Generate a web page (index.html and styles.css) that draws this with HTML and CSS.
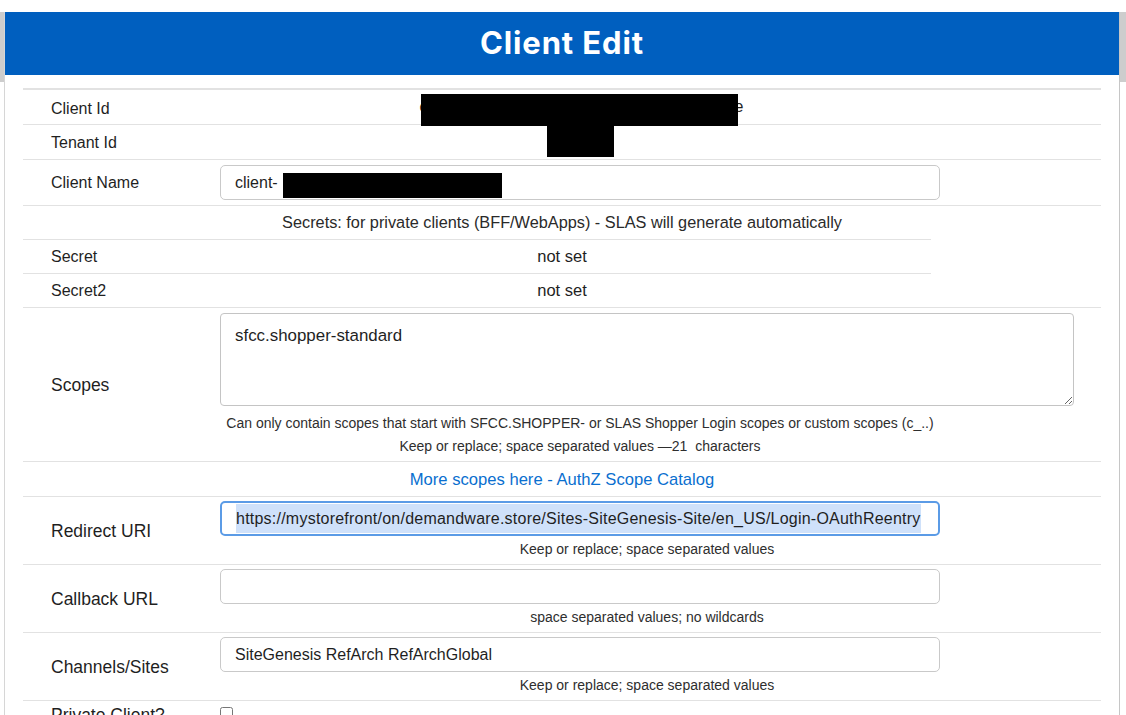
FILE: index.html
```html
<!DOCTYPE html>
<html lang="en">
<head>
<meta charset="utf-8">
<title>Client Edit</title>
<link rel="stylesheet" href="styles.css">
</head>
<body>
<div class="page">
  <div class="panel">
    <header class="title-bar"><h1>Client Edit</h1></header>
    <div class="form">
      <div class="rows">
        <div class="row row-short row-first">
          <div class="label">Client Id</div>
          <div class="value-center"><span class="masked">c<span class="redact redact-id"></span>e</span></div>
        </div>
        <div class="row row-short row-second">
          <div class="label">Tenant Id</div>
          <div class="value-center"><span class="redact redact-tenant"></span></div>
        </div>
        <div class="row row-input">
          <div class="label">Client Name</div>
          <div class="value"><div class="input">client-<span class="redact redact-name"></span></div></div>
        </div>
        <div class="row row-block">
          <div class="secrets-head">Secrets: for private clients (BFF/WebApps) - SLAS will generate automatically</div>
          <div class="secrets">
            <div class="secret-row secret-first">
              <div class="label">Secret</div>
              <div class="secret-value">not set</div>
            </div>
            <div class="secret-row">
              <div class="label">Secret2</div>
              <div class="secret-value">not set</div>
            </div>
          </div>
        </div>
        <div class="row row-scopes">
          <div class="label label-lg">Scopes</div>
          <div class="value">
            <textarea class="scopes-area">sfcc.shopper-standard</textarea>
            <div class="help-center">
              <div>Can only contain scopes that start with SFCC.SHOPPER- or SLAS Shopper Login scopes or custom scopes (c_..)</div>
              <div>Keep or replace; space separated values —21&nbsp; characters</div>
            </div>
          </div>
        </div>
        <div class="row row-block row-link">
          <a class="catalog-link" href="#">More scopes here - AuthZ Scope Catalog</a>
        </div>
        <div class="row row-field">
          <div class="label label-lg">Redirect URI</div>
          <div class="value">
            <div class="input input-focus"><span class="selected">https://mystorefront/on/demandware.store/Sites-SiteGenesis-Site/en_US/Login-OAuthReentry</span></div>
            <div class="help-wide">Keep or replace; space separated values</div>
          </div>
        </div>
        <div class="row row-field">
          <div class="label label-lg">Callback URL</div>
          <div class="value">
            <div class="input"></div>
            <div class="help-wide">space separated values; no wildcards</div>
          </div>
        </div>
        <div class="row row-field">
          <div class="label label-lg">Channels/Sites</div>
          <div class="value">
            <div class="input">SiteGenesis RefArch RefArchGlobal</div>
            <div class="help-wide">Keep or replace; space separated values</div>
          </div>
        </div>
        <div class="row row-check">
          <div class="label label-lg">Private Client?</div>
          <div class="value"><input type="checkbox" class="check"></div>
        </div>
      </div>
    </div>
  </div>
</div>
</body>
</html>
```
FILE: styles.css
```css
* { box-sizing: border-box; }
html, body { margin: 0; background: #fff; }
body {
  font-family: "Liberation Sans", Arial, sans-serif;
  font-size: 16px;
  color: #1f1f1f;
}
.page {
  height: 715px;
  overflow: hidden;
  padding-top: 12px;
  background: linear-gradient(to bottom, #fff 0, #fff 12px, #cdcdcd 12px, #cdcdcd 82px, #fff 82px);
}
.panel {
  margin: 0 6px 0 4px;
  border-left: 1px solid #d6d6d6;
  border-right: 1px solid #c6c6c6;
  background: #fff;
  min-height: 720px;
}
.title-bar {
  height: 63px;
  background: #005fbf;
  display: flex;
  align-items: center;
  justify-content: center;
}
.title-bar h1 {
  margin: 0 0 2px;
  font-family: Inter, "Liberation Sans", sans-serif;
  font-weight: 700;
  font-size: 31px;
  color: #fff;
  letter-spacing: 0.9px;
}
.form { padding: 13px 18px 0; }
.rows { border-top: 2px solid #e2e2e2; }
.row {
  display: grid;
  grid-template-columns: 197px 1fr;
  align-items: center;
  border-bottom: 1px solid #e2e2e2;
}
.label { padding-left: 28px; }
.label-lg { font-size: 17.5px; }
.row-short { height: 35px; }
.row-first .label { padding-top: 4px; }
.row-second .label { padding-top: 2px; }
.value-center {
  width: 720px;
  text-align: center;
  line-height: 34px;
}
.masked { display: inline-block; padding-left: 3px; }
.redact {
  display: inline-block;
  background: #000;
  vertical-align: middle;
  position: relative;
}
.redact-id { width: 317px; height: 32px; margin-left: -7px; margin-right: -3px; top: 2px; }
.redact-tenant { width: 67px; height: 32px; top: -2px; }
.redact-name { width: 219px; height: 25px; top: 3px; margin-left: 5px; }
.row-input { padding: 5px 0; }
.input {
  width: 720px;
  height: 35px;
  border: 1px solid #c9c9c9;
  border-radius: 5px;
  padding: 0 14px;
  display: flex;
  align-items: center;
  white-space: nowrap;
  overflow: hidden;
  color: #1f1f1f;
  background: #fff;
}
.input-focus {
  border: 2px solid #5b9be6;
  padding: 1px 13px 1px 14px;
  align-items: stretch;
}
.selected {
  background: #cfe1fa;
  display: flex;
  align-items: center;
  letter-spacing: 0.23px;
}
.row-block { display: block; }
.secrets-head {
  height: 33px;
  line-height: 33px;
  text-align: center;
  font-size: 16.3px;
  color: #2a2a2a;
}
.secrets {
  width: 908px;
  border-top: 1px solid #e2e2e2;
}
.secret-row {
  display: grid;
  grid-template-columns: 170px 1fr;
  height: 33px;
  align-items: center;
}
.secret-first { height: 34px; border-bottom: 1px solid #e2e2e2; }
.secret-value { text-align: center; font-size: 16.5px; }
.row-scopes { padding: 5px 0 3px; }
.scopes-area {
  display: block;
  width: 854px;
  height: 93px;
  border: 1px solid #c4c4c4;
  border-radius: 4px;
  padding: 12px 14px;
  font-family: "Liberation Sans", Arial, sans-serif;
  font-size: 16.9px;
  line-height: 20px;
  color: #1f1f1f;
  resize: vertical;
  margin: 0;
}
.help-center {
  width: 720px;
  margin-top: 6px;
  text-align: center;
  font-size: 14px;
  line-height: 23px;
  color: #2e2e2e;
}
.row-link {
  height: 35px;
  line-height: 35px;
  text-align: center;
}
.catalog-link { color: #0a6fcf; text-decoration: none; font-size: 16.6px; }
.row-field { padding: 4px 0 3px; }
.help-wide {
  width: 854px;
  margin-top: 2px;
  text-align: center;
  font-size: 14px;
  line-height: 23px;
  color: #2e2e2e;
}
.row-check { align-items: start; padding-top: 4px; line-height: 20px; }
.check { margin: 2px 0 0; width: 13px; height: 13px; }
```
